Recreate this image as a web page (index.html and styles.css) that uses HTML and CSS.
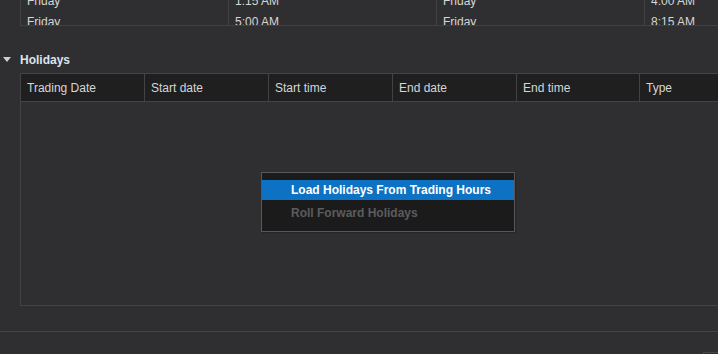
FILE: index.html
```html
<!DOCTYPE html>
<html lang="en">
<head>
    <meta charset="UTF-8">
    <meta name="viewport" content="width=device-width, initial-scale=1.0">
    <title>Trading Hours - Holidays</title>
    <link rel="stylesheet" href="styles.css">
</head>
<body>
    <div class="sessions">
        <div class="sessions-rows">
            <div class="session-row">
                <div class="cell">Friday</div>
                <div class="cell">1:15 AM</div>
                <div class="cell">Friday</div>
                <div class="cell">4:00 AM</div>
            </div>
            <div class="session-row">
                <div class="cell">Friday</div>
                <div class="cell">5:00 AM</div>
                <div class="cell">Friday</div>
                <div class="cell">8:15 AM</div>
            </div>
        </div>
    </div>

    <div class="section-head">
        <span class="arrow"></span>
        <span class="section-title">Holidays</span>
    </div>

    <div class="holidays">
        <div class="holidays-head">
            <div class="head-cell">Trading Date</div>
            <div class="head-cell">Start date</div>
            <div class="head-cell">Start time</div>
            <div class="head-cell">End date</div>
            <div class="head-cell">End time</div>
            <div class="head-cell">Type</div>
        </div>
        <div class="holidays-body"></div>
    </div>

    <div class="separator"></div>
    <div class="corner"></div>

    <div class="context-menu">
        <div class="menu-item active">Load Holidays From Trading Hours</div>
        <div class="menu-item disabled">Roll Forward Holidays</div>
    </div>
</body>
</html>
```

FILE: styles.css
```css
body {
    margin: 0;
    width: 718px;
    height: 354px;
    overflow: hidden;
    background-color: #2f2f31;
    color: #d6d6d6;
    font-family: "Liberation Sans", Arial, sans-serif;
    font-size: 12px;
    position: relative;
}
.sessions {
    margin-left: 20px;
    height: 25px;
    border-left: 1px solid #414143;
    border-bottom: 1px solid #414143;
    overflow: hidden;
}
.sessions-rows {
    margin-top: -9px;
}
.session-row {
    display: grid;
    grid-template-columns: repeat(4, 208px);
}
.session-row .cell {
    box-sizing: border-box;
    height: 21px;
    line-height: 21px;
    padding-left: 6px;
    border-right: 1px solid #414143;
}
.section-head {
    display: flex;
    align-items: center;
    gap: 9px;
    height: 16px;
    margin-top: 26px;
}
.arrow {
    width: 0;
    height: 0;
    margin-left: 3px;
    margin-top: -2px;
    border-left: 4px solid transparent;
    border-right: 4px solid transparent;
    border-top: 5px solid #cfcfcf;
}
.section-title {
    font-weight: bold;
    color: #dde3ee;
}
.holidays {
    margin-top: 5px;
    margin-left: 20px;
    width: 700px;
    border: 1px solid #434345;
}
.holidays-head {
    display: grid;
    grid-template-columns: 124px 124px 124px 124px 123px 1fr;
    height: 27px;
    background-color: #1f1f20;
    border-bottom: 1px solid #434345;
}
.head-cell {
    line-height: 27px;
    padding: 1px 0 0 6px;
    border-right: 1px solid #434345;
    box-sizing: border-box;
    color: #d6d6d6;
}
.holidays-body {
    height: 203px;
}
.separator {
    margin-top: 25px;
    border-top: 1px solid #444446;
}
.corner {
    margin-top: 20px;
    margin-left: 703px;
    height: 4px;
    border-top: 1px solid #444446;
    border-left: 1px solid #444446;
}
.context-menu {
    position: absolute;
    left: 261px;
    top: 172px;
    width: 252px;
    padding: 7px 0 8px;
    background-color: #1b1b1c;
    border: 1px solid #575759;
    box-shadow: 1px 1px 1px #262628;
}
.menu-item {
    height: 20px;
    line-height: 20px;
    padding-left: 29px;
    font-weight: bold;
}
.menu-item.active {
    background-color: #0d72c4;
    color: #ffffff;
}
.menu-item.disabled {
    margin-top: 3px;
    color: #5c5c5e;
}
```
